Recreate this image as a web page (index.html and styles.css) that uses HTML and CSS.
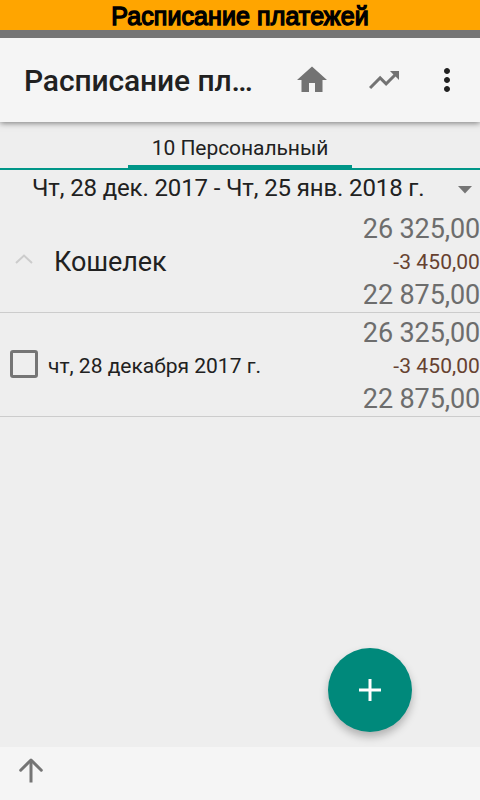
FILE: index.html
```html
<!DOCTYPE html>
<html lang="ru">
<head>
<meta charset="utf-8">
<title>Расписание платежей</title>
<link rel="stylesheet" href="styles.css">
</head>
<body>
<div class="banner"><span>Расписание платежей</span></div>
<div class="status"></div>
<header class="toolbar">
  <h1 class="title">Расписание пл…</h1>
  <svg class="icon home" viewBox="0 0 24 24"><path d="M10 20v-6h4v6h5v-8h3L12 3 2 12h3v8z"/></svg>
  <svg class="icon trend" viewBox="0 0 24 24"><path d="M16 6l2.29 2.29-4.88 4.88-4-4L2 16.59 3.41 18l6-6 4 4 6.3-6.29L22 12V6z"/></svg>
  <svg class="icon more" viewBox="0 0 24 24"><path d="M12 8c1.1 0 2-.9 2-2s-.9-2-2-2-2 .9-2 2 .9 2 2 2zm0 2c-1.1 0-2 .9-2 2s.9 2 2 2 2-.9 2-2-.9-2-2-2zm0 6c-1.1 0-2 .9-2 2s.9 2 2 2 2-.9 2-2-.9-2-2-2z"/></svg>
</header>
<nav class="tabs"><div class="tab"><span>10 Персональный</span></div></nav>
<div class="period">
  <span class="range">Чт, 28 дек. 2017 - Чт, 25 янв. 2018 г.</span>
  <svg class="caret" viewBox="0 0 14 8"><path d="M0 0h14L7 7.5z"/></svg>
</div>
<main class="list">
  <div class="row group">
    <svg class="chevron" viewBox="0 0 18 10"><path d="M1 9l8-7.5L17 9"/></svg>
    <span class="account">Кошелек</span>
    <div class="sums"><span>26 325,00</span><span class="change">-3 450,00</span><span>22 875,00</span></div>
  </div>
  <div class="row">
    <span class="checkbox"></span>
    <span class="date">чт, 28 декабря 2017 г.</span>
    <div class="sums"><span>26 325,00</span><span class="change">-3 450,00</span><span>22 875,00</span></div>
  </div>
</main>
<footer class="bottom">
  <svg class="up" viewBox="0 0 24 25"><path class="stem" d="M12 24.5V2"/><path d="M1.7 12.2L12 2l10.3 10.2"/></svg>
</footer>
<button class="fab" aria-label="Добавить"><svg viewBox="0 0 22 22"><path d="M11 0v22M0 11h22"/></svg></button>
</body>
</html>
```
FILE: styles.css
```css
* { box-sizing: border-box; }
body {
  margin: 0;
  width: 480px;
  height: 800px;
  overflow: hidden;
  display: flex;
  flex-direction: column;
  background: #eee;
  color: #212121;
  font-family: Roboto, sans-serif;
  position: relative;
}
.banner {
  height: 30px;
  background: #ffa500;
  color: #000;
  font: 25px/32px "Liberation Sans", sans-serif;
  letter-spacing: .1px;
  text-align: center;
  -webkit-text-stroke: 1.4px #000;
  white-space: nowrap;
}
.status { height: 8px; background: #757575; position: relative; z-index: 1; }
.toolbar {
  height: 84px;
  display: flex;
  align-items: center;
  background: #f5f5f5;
  padding-left: 24px;
  box-shadow: 0 1px 6px rgba(0, 0, 0, .5);
}
.title {
  margin: 0;
  padding-top: 2px;
  width: 270px;
  font-size: 30px;
  font-weight: 500;
  line-height: 36px;
  letter-spacing: -.12px;
  white-space: nowrap;
}
.icon { width: 36px; height: 36px; fill: #737373; flex: none; }
.trend { margin-left: 36px; }
.more { margin-left: 27px; fill: #212121; }
.tabs {
  height: 48px;
  display: flex;
  justify-content: center;
  border-bottom: 2px solid #009688;
}
.tab {
  width: 224px;
  height: 48px;
  border-bottom: 5px solid #009688;
  text-align: center;
  font-size: 21px;
  line-height: 52px;
  letter-spacing: -.06px;
  white-space: nowrap;
}
.period {
  height: 39px;
  display: flex;
  align-items: center;
  justify-content: space-between;
  padding: 0 8px 3px 32px;
  font-size: 24px;
  line-height: 36px;
  letter-spacing: -.13px;
  white-space: nowrap;
}
.caret { width: 14px; height: 8px; fill: #757575; margin-top: 4px; }
.row {
  height: 104px;
  display: flex;
  align-items: center;
  border-bottom: 1px solid #ccc;
  padding: 3px 0 1px;
}
.row.group { padding-left: 15px; }
.chevron { width: 18px; height: 10px; margin: -5px 21px 0 0; fill: none; stroke: #ccc; stroke-width: 2; }
.account { font-size: 27px; letter-spacing: -.1px; }
.checkbox {
  width: 28px;
  height: 28px;
  margin: -3px 10px 0 10px;
  border: 3px solid #757575;
  border-radius: 3px;
}
.date { font-size: 21px; }
.sums {
  margin-left: auto;
  padding-top: 2px;
  display: flex;
  flex-direction: column;
  text-align: right;
  font-size: 27px;
  line-height: 33px;
  letter-spacing: -.12px;
  color: #6d6d6d;
}
.sums .change { font-size: 21px; letter-spacing: .08px; color: #664130; }
.list { flex: 1; }
.bottom { height: 53px; background: #f5f5f5; padding: 11px 0 0 19px; }
.up { display: block; width: 24px; height: 25px; overflow: visible; fill: none; stroke: #757575; stroke-width: 3; stroke-linecap: round; stroke-linejoin: round; }
.up .stem { stroke-linecap: butt; }
.fab {
  position: absolute;
  left: 328px;
  top: 648px;
  width: 84px;
  height: 84px;
  border: 0;
  border-radius: 50%;
  background: #00897b;
  display: flex;
  align-items: center;
  justify-content: center;
  padding: 0;
  box-shadow: 0 5px 8px rgba(0, 0, 0, .26);
}
.fab svg { width: 22px; height: 22px; stroke: #fff; stroke-width: 3; }
```
